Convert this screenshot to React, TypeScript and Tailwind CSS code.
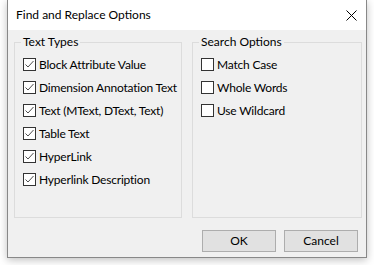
import React from "react";

const textTypes = [
  "Block Attribute Value",
  "Dimension Annotation Text",
  "Text (MText, DText, Text)",
  "Table Text",
  "HyperLink",
  "Hyperlink Description",
];

const searchOptions = ["Match Case", "Whole Words", "Use Wildcard"];

function CheckBox({ checked }: { checked: boolean }) {
  return (
    <div className="w-[13px] h-[13px] border border-[#333333] bg-white shrink-0">
      {checked && (
        <svg width="11" height="11" viewBox="0 0 11 11">
          <polyline
            points="1.5,5.5 4,8 9.5,2"
            fill="none"
            stroke="#4d4d4d"
            strokeWidth="1"
          />
        </svg>
      )}
    </div>
  );
}

function Option({ label, checked }: { label: string; checked: boolean }) {
  return (
    <div className="h-[23px] flex items-center gap-[3px] whitespace-nowrap">
      <CheckBox checked={checked} />
      <span className="tracking-[-0.2px]">{label}</span>
    </div>
  );
}

function GroupBox({
  title,
  className,
  children,
}: {
  title: string;
  className: string;
  children: React.ReactNode;
}) {
  return (
    <fieldset className={`border border-[#dcdcdc] h-[184px] ${className}`}>
      <legend className="ml-[6px] px-[2px] leading-[16px]">{title}</legend>
      <div className="pt-[3px] pl-[8px]">{children}</div>
    </fieldset>
  );
}

export default function App() {
  return (
    <div
      className="w-[374px] h-[265px] bg-white overflow-hidden text-[12px] text-black"
      style={{ fontFamily: 'Lato, "Segoe UI", sans-serif' }}
    >
      <div className="ml-[7px] w-[360px] h-[258px] border-x border-b border-[#888888] shadow-[0_2px_8px_rgba(0,0,0,0.25)] flex flex-col">
        {/* Title bar */}
        <div className="h-[30px] bg-white flex items-center justify-between pl-[8px] pr-[9px]">
          <span>Find and Replace Options</span>
          <svg width="11" height="11" viewBox="0 0 11 11">
            <path d="M0.5 0.5 L10.5 10.5 M10.5 0.5 L0.5 10.5" stroke="#000" strokeWidth="1" />
          </svg>
        </div>

        {/* Client area */}
        <div className="flex-1 bg-[#f0f0f0] pt-[4px]">
          <div className="flex gap-[10px] pl-[6px]">
            <GroupBox title="Text Types" className="w-[168px]">
              {textTypes.map((t) => (
                <Option key={t} label={t} checked />
              ))}
            </GroupBox>
            <GroupBox title="Search Options" className="w-[170px]">
              {searchOptions.map((t) => (
                <Option key={t} label={t} checked={false} />
              ))}
            </GroupBox>
          </div>

          {/* Buttons */}
          <div className="flex justify-end gap-[8px] pr-[8px] mt-[12px]">
            <button className="w-[74px] h-[22px] bg-[#e1e1e1] border border-[#adadad]">OK</button>
            <button className="w-[74px] h-[22px] bg-[#e1e1e1] border border-[#adadad]">Cancel</button>
          </div>
        </div>
      </div>
    </div>
  );
}
